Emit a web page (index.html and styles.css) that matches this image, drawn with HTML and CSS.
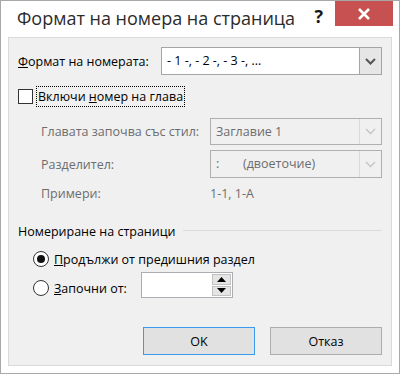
FILE: index.html
```html
<!DOCTYPE html>
<html lang="bg">
<head>
  <meta charset="UTF-8">
  <title>Формат на номера на страница</title>
  <link rel="stylesheet" href="styles.css">
</head>
<body>
  <div class="window">
    <div class="titlebar">
      <span class="title">Формат на номера на страница</span>
      <span class="help">?</span>
      <span class="close">
        <svg width="14" height="12" viewBox="0 0 14 12"><path d="M2 1 L12 11 M12 1 L2 11" stroke="#fff" stroke-width="2.6"/></svg>
      </span>
    </div>

    <div class="client">
      <div class="row-format">
        <span class="format-label"><u>Ф</u>ормат на номерата:</span>
        <div class="combo">
          <span class="combo-text">- 1 -, - 2 -, - 3 -, ...</span>
          <span class="combo-btn">
            <svg width="11" height="7" viewBox="0 0 11 7"><path d="M1 1 L5.5 5.5 L10 1" fill="none" stroke="#555" stroke-width="2"/></svg>
          </span>
        </div>
      </div>

      <div class="row-check">
        <span class="checkbox"></span>
        <span class="focus-label">Включи <u>н</u>омер на глава</span>
      </div>

      <div class="chapter">
        <span class="dim">Главата започва със стил:</span>
        <div class="combo disabled">
          <span class="combo-text">Заглавие 1</span>
          <span class="combo-btn">
            <svg width="11" height="7" viewBox="0 0 11 7"><path d="M1 1 L5.5 5.5 L10 1" fill="none" stroke="#c4c4c4" stroke-width="1.4"/></svg>
          </span>
        </div>
        <span class="dim">Разделител:</span>
        <div class="combo disabled">
          <span class="combo-text"><span class="colon">:</span>(двоеточие)</span>
          <span class="combo-btn">
            <svg width="11" height="7" viewBox="0 0 11 7"><path d="M1 1 L5.5 5.5 L10 1" fill="none" stroke="#c4c4c4" stroke-width="1.4"/></svg>
          </span>
        </div>
        <span class="dim">Примери:</span>
        <span class="dim">1-1, 1-А</span>
      </div>

      <div class="section-head">
        <span>Номериране на страници</span>
        <span class="rule"></span>
      </div>

      <div class="radios">
        <div class="radio-row">
          <span class="radio checked"></span>
          <span><u>П</u>родължи от предишния раздел</span>
        </div>
        <div class="radio-row start">
          <div class="start-label">
            <span class="radio"></span>
            <span><u>З</u>апочни от:</span>
          </div>
          <div class="spin">
            <span class="spin-field"></span>
            <span class="spin-btns">
              <span class="spin-btn"><svg width="9" height="5" viewBox="0 0 9 5"><path d="M0 5 L4.5 0 L9 5 Z" fill="#000"/></svg></span>
              <span class="spin-btn"><svg width="9" height="5" viewBox="0 0 9 5"><path d="M0 0 L4.5 5 L9 0 Z" fill="#000"/></svg></span>
            </span>
          </div>
        </div>
      </div>

      <div class="buttons">
        <button class="btn default">OK</button>
        <button class="btn">Отказ</button>
      </div>
    </div>
  </div>
</body>
</html>
```

FILE: styles.css
```css
* {
  margin: 0;
  padding: 0;
  box-sizing: border-box;
}

body {
  background: #fff;
  font-family: 'Open Sans', 'Noto Sans', sans-serif;
  font-size: 12.5px;
  color: #000;
}

/* Window frame */
.window {
  width: 400px;
  height: 374px;
  border: 1px solid #a8a8a8;
  background: #fff;
  display: flex;
  flex-direction: column;
}

.titlebar {
  height: 36px;
  display: flex;
  align-items: flex-start;
}

.title {
  flex: 1;
  padding: 5px 0 0 16px;
  font-size: 18px;
  white-space: nowrap;
  color: #2b2b2b;
}

.help {
  margin: 3px 12px 0 0;
  font-size: 18px;
  font-weight: bold;
  color: #1a1a1a;
}

.close {
  width: 58px;
  height: 25px;
  margin-right: 6px;
  background: #c75050;
  display: flex;
  justify-content: center;
  align-items: center;
}

/* Client area */
.client {
  flex: 1;
  margin: 0 7px 7px 7px;
  border: 1px solid #dadada;
  background: #f0f0f0;
  padding: 9px 9px 10px 9px;
  display: flex;
  flex-direction: column;
}

.row-format {
  display: flex;
  align-items: center;
  height: 28px;
}

.format-label {
  width: 143px;
  white-space: nowrap;
}

.combo {
  flex: 1;
  height: 28px;
  display: flex;
  border: 1px solid #a5a5a5;
  background: #fff;
}

.combo-text {
  flex: 1;
  padding-left: 5px;
  line-height: 26px;
}

.combo-btn {
  width: 22px;
  background: #e6e6e6;
  border-left: 1px solid #a5a5a5;
  display: flex;
  justify-content: center;
  align-items: center;
}

.combo.disabled {
  height: auto;
  border-color: #b0b0b0;
  background: #f0f0f0;
  color: #6d6d6d;
}

.combo.disabled .combo-btn {
  background: #f0f0f0;
  border-left-color: #dadada;
}

.colon {
  display: inline-block;
  width: 27px;
}

/* Checkbox row */
.row-check {
  margin-top: 11px;
  height: 20px;
  display: flex;
  align-items: center;
}

.checkbox {
  width: 15px;
  height: 15px;
  border: 1px solid #333;
  background: #fff;
  margin-right: 4px;
}

.focus-label {
  outline: 1px dotted #000;
  padding: 0 1px;
  line-height: 19px;
}

/* Chapter settings */
.chapter {
  margin-top: 12px;
  padding-left: 23px;
  display: grid;
  grid-template-columns: 169px 1fr;
  grid-template-rows: 27px 28px 20px;
  row-gap: 5px;
  align-items: center;
}

.chapter .combo {
  align-self: stretch;
}

.dim {
  color: #6d6d6d;
}

/* Page numbering */
.section-head {
  margin-top: 20px;
  height: 16px;
  display: flex;
  align-items: center;
}

.rule {
  flex: 1;
  height: 1px;
  background: #dcdcdc;
  margin: 0 0 2px 8px;
}

.radios {
  margin-top: 10px;
  padding-left: 15px;
}

.radio-row {
  height: 20px;
  display: flex;
  align-items: center;
}

.radio {
  width: 16px;
  height: 16px;
  border: 1px solid #333;
  border-radius: 50%;
  background: #fff;
  margin-right: 5px;
  display: flex;
  justify-content: center;
  align-items: center;
}

.radio.checked::after {
  content: "";
  width: 8px;
  height: 8px;
  border-radius: 50%;
  background: #111;
}

.radio-row.start {
  margin-top: 3px;
  height: 26px;
}

.start-label {
  width: 108px;
  display: flex;
  align-items: center;
  padding-top: 6px;
}

.spin {
  width: 92px;
  height: 26px;
  border: 1px solid #abadb3;
  background: #fff;
  display: flex;
}

.spin-field {
  flex: 1;
}

.spin-btns {
  width: 20px;
  display: flex;
  flex-direction: column;
  padding: 1px 1px 1px 0;
  gap: 1px;
}

.spin-btn {
  flex: 1;
  background: #e5e5e5;
  border: 1px solid #c2c2c2;
  display: flex;
  justify-content: center;
  align-items: center;
}

/* Footer buttons */
.buttons {
  margin-top: auto;
  display: flex;
  justify-content: flex-end;
  gap: 15px;
}

.btn {
  width: 112px;
  height: 28px;
  border: 1px solid #adadad;
  background: #e1e1e1;
  font-family: inherit;
  font-size: 12.5px;
  color: #000;
}

.btn.default {
  border-color: #3c9aee;
}
```
